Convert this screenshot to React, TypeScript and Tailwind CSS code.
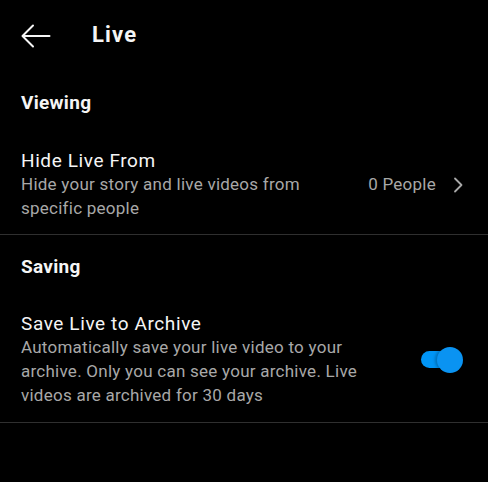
import React from "react";

function BackArrow() {
  return (
    <svg width="30" height="24" viewBox="0 0 30 24" fill="none" stroke="#f5f5f5" strokeWidth="2" strokeLinecap="round" strokeLinejoin="round">
      <path d="M28.5 12H2" />
      <path d="M12 1.5L1.5 12L12 22.5" />
    </svg>
  );
}

function Chevron() {
  return (
    <svg width="10" height="16" viewBox="0 0 10 16" fill="none" stroke="#a8a8a8" strokeWidth="1.8" strokeLinecap="round" strokeLinejoin="round">
      <path d="M2 1.5L8.5 8L2 14.5" />
    </svg>
  );
}

function Toggle() {
  return (
    <div className="relative w-[42px] h-[26px] flex items-center">
      <div className="absolute left-0 top-[4px] w-[34px] h-[17px] rounded-full bg-[#0095f6]" />
      <div className="absolute right-0 top-0 w-[26px] h-[26px] rounded-full bg-[#0a93f2] shadow-[-2px_0_3px_rgba(0,0,0,0.25)]" />
    </div>
  );
}

export default function App() {
  return (
    <div
      className="w-[488px] h-[482px] bg-black text-[#f5f5f5] overflow-hidden"
      style={{ fontFamily: "Roboto, 'Noto Sans', sans-serif" }}
    >
      <div className="h-[72px] flex items-center pl-[21px]">
        <BackArrow />
        <div className="ml-[41px] text-[22px] tracking-[1.2px] font-bold leading-[24px] -mt-[2px]">Live</div>
      </div>

      <div className="pt-[19px] px-[21px] text-[19px] tracking-[0.3px] font-bold leading-[24px]">Viewing</div>

      <div className="mt-[35px] flex items-center pl-[21px] pr-[25px] pb-[14px] border-b border-[#2f2f2f]">
        <div className="w-[300px]">
          <div className="text-[19px] tracking-[0.6px] leading-[22px]">Hide Live From</div>
          <div className="text-[17px] tracking-[0.25px] leading-[24px] text-[#a8a8a8]">
            Hide your story and live videos from specific people
          </div>
        </div>
        <div className="ml-auto flex items-center gap-[17px] text-[17px] tracking-[0.25px] text-[#a8a8a8]">
          <span>0 People</span>
          <Chevron />
        </div>
      </div>

      <div className="pt-[20px] px-[21px] text-[19px] tracking-[0.3px] font-bold leading-[24px]">Saving</div>

      <div className="mt-[34px] flex items-center pl-[21px] pr-[25px] pb-[15px] border-b border-[#2f2f2f]">
        <div className="w-[345px]">
          <div className="text-[19px] tracking-[0.6px] leading-[22px]">Save Live to Archive</div>
          <div className="text-[17px] tracking-[0.25px] leading-[24px] text-[#a8a8a8]">
            Automatically save your live video to your archive. Only you can see your archive. Live videos are archived for 30 days
          </div>
        </div>
        <div className="ml-auto">
          <Toggle />
        </div>
      </div>
    </div>
  );
}
